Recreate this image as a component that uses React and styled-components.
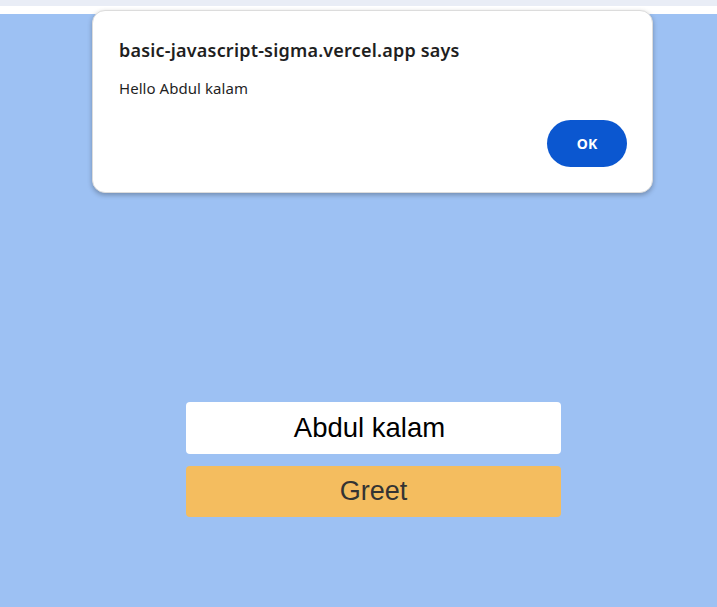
import React, { useState } from 'react';
import styled, { createGlobalStyle } from 'styled-components';

const GlobalStyle = createGlobalStyle`
  html, body {
    margin: 0;
    padding: 0;
    height: 100%;
    background: #9dc1f3;
  }
  #root {
    min-height: 100%;
  }
`;

const Page = styled.div`
  position: relative;
  display: flex;
  flex-direction: column;
  min-height: 607px;
  background: #9dc1f3;
`;

const TopStrip = styled.div`
  height: 6px;
  background: #e9edf6;
  border-bottom: 8px solid #ffffff;
`;

const Main = styled.main`
  display: flex;
  flex-direction: column;
  align-items: center;
  gap: 12px;
  padding: 388px 0 0 30px;
`;

const NameInput = styled.input`
  box-sizing: border-box;
  width: 375px;
  height: 52px;
  padding: 0 8px 0 0;
  border: none;
  border-radius: 4px;
  background: #ffffff;
  color: #000;
  font-family: 'Liberation Sans', Arial, sans-serif;
  font-size: 27.5px;
  text-align: center;
  outline: none;
`;

const GreetButton = styled.button`
  box-sizing: border-box;
  width: 375px;
  height: 51px;
  border: none;
  border-radius: 4px;
  background: #f4bd5f;
  color: #333333;
  font-family: 'Liberation Sans', Arial, sans-serif;
  font-size: 27px;
  cursor: pointer;
`;

const Dialog = styled.div`
  position: absolute;
  top: 10px;
  left: 92px;
  box-sizing: border-box;
  width: 561px;
  height: 183px;
  padding: 27px 25px 25px 26px;
  background: #ffffff;
  border: 1px solid #dcdcdc;
  border-radius: 13px;
  box-shadow: 0 2px 5px rgba(0, 0, 0, 0.28);
  display: flex;
  flex-direction: column;
  font-family: 'Noto Sans', 'Open Sans', sans-serif;
  color: #1f1f1f;
`;

const DialogTitle = styled.h1`
  margin: 0;
  font-size: 18px;
  font-weight: 600;
  line-height: 24px;
  letter-spacing: 0.2px;
`;

const DialogMessage = styled.p`
  margin: 16px 0 0;
  font-size: 15px;
  line-height: 20px;
  letter-spacing: 0.05px;
`;

const DialogActions = styled.div`
  display: flex;
  justify-content: flex-end;
  margin-top: auto;
`;

const OkButton = styled.button`
  width: 80px;
  height: 47px;
  border: none;
  border-radius: 24px;
  background: #0b57d0;
  color: #ffffff;
  font-family: 'Noto Sans', 'Open Sans', sans-serif;
  font-size: 14px;
  font-weight: 700;
  cursor: pointer;
`;

export default function App() {
  const [name, setName] = useState('Abdul kalam');
  const [open, setOpen] = useState(true);

  return (
    <Page>
      <GlobalStyle />
      <TopStrip />
      <Main>
        <NameInput value={name} onChange={e => setName(e.target.value)} />
        <GreetButton onClick={() => setOpen(true)}>Greet</GreetButton>
      </Main>
      {open && (
        <Dialog>
          <DialogTitle>basic-javascript-sigma.vercel.app says</DialogTitle>
          <DialogMessage>Hello {name}</DialogMessage>
          <DialogActions>
            <OkButton onClick={() => setOpen(false)}>OK</OkButton>
          </DialogActions>
        </Dialog>
      )}
    </Page>
  );
}
